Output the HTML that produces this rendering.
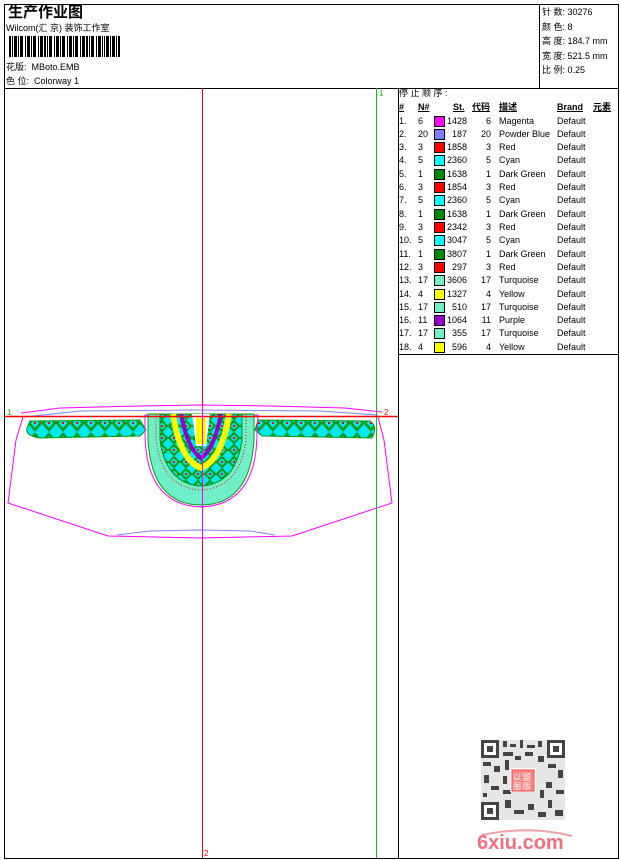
<!DOCTYPE html>
<html><head><meta charset="utf-8"><style>
*{margin:0;padding:0}
body{width:620px;height:860px;background:#fff;position:relative;overflow:hidden;font-family:"Liberation Sans","Noto Sans CJK SC",sans-serif;color:#000}
.t{position:absolute;font-size:9px;white-space:nowrap;line-height:11px}
</style></head><body>
<svg width="620" height="860" style="position:absolute;left:0;top:0" xmlns="http://www.w3.org/2000/svg">
<defs>
<pattern id="dia" x="0" y="0" width="14" height="18" patternUnits="userSpaceOnUse">
<rect width="14" height="18" fill="#00e8f0"/>
<path d="M7 2 L13 9 L7 16 L1 9Z" fill="none" stroke="#089a10" stroke-width="2.5"/>
<rect x="6" y="8" width="2" height="2" fill="#f00"/>
</pattern>
<pattern id="dia2" x="0" y="0" width="12" height="12" patternUnits="userSpaceOnUse">
<rect width="12" height="12" fill="#00e8f0"/>
<path d="M6 1 L11 6 L6 11 L1 6Z" fill="none" stroke="#089a10" stroke-width="2.2"/>
<rect x="5" y="5" width="2" height="2" fill="#f00"/>
</pattern>
</defs>
<rect x="4.5" y="4.5" width="614" height="854" fill="none" stroke="#000"/>
<line x1="4" y1="88.5" x2="618" y2="88.5" stroke="#000"/>
<line x1="539.5" y1="4" x2="539.5" y2="88" stroke="#000"/>
<line x1="398.5" y1="88" x2="398.5" y2="858" stroke="#000"/>
<line x1="398" y1="354.5" x2="618" y2="354.5" stroke="#000"/>
<!-- barcode -->
<g fill="#000">
<rect x="9" y="36" width="2" height="21"/><rect x="12" y="36" width="1" height="21"/><rect x="14" y="36" width="3" height="21"/><rect x="18" y="36" width="1" height="21"/><rect x="20" y="36" width="3" height="21"/><rect x="25" y="36" width="1" height="21"/><rect x="27" y="36" width="3" height="21"/><rect x="31" y="36" width="1" height="21"/><rect x="33" y="36" width="3" height="21"/><rect x="38" y="36" width="1" height="21"/><rect x="40" y="36" width="3" height="21"/><rect x="44" y="36" width="2" height="21"/><rect x="47" y="36" width="1" height="21"/><rect x="49" y="36" width="3" height="21"/><rect x="54" y="36" width="1" height="21"/><rect x="56" y="36" width="3" height="21"/><rect x="60" y="36" width="1" height="21"/><rect x="62" y="36" width="3" height="21"/><rect x="67" y="36" width="1" height="21"/><rect x="69" y="36" width="3" height="21"/><rect x="73" y="36" width="1" height="21"/><rect x="75" y="36" width="3" height="21"/><rect x="80" y="36" width="1" height="21"/><rect x="82" y="36" width="3" height="21"/><rect x="86" y="36" width="2" height="21"/><rect x="89" y="36" width="1" height="21"/><rect x="91" y="36" width="3" height="21"/><rect x="96" y="36" width="1" height="21"/><rect x="98" y="36" width="3" height="21"/><rect x="102" y="36" width="1" height="21"/><rect x="104" y="36" width="1" height="21"/><rect x="106" y="36" width="3" height="21"/><rect x="110" y="36" width="1" height="21"/><rect x="112" y="36" width="3" height="21"/><rect x="116" y="36" width="1" height="21"/><rect x="118" y="36" width="2" height="21"/>
</g>
<!-- garment outlines -->
<g fill="none" stroke-width="1">
<path d="M21 413 L60 408 L140 406 L200 405 L270 406 L345 408 L382 412" stroke="#f0f"/>
<path d="M24 417 L80 411 L200 410 L320 411 L378 415" stroke="#8080ff"/>
<path d="M23 417 L16 440 L8 503 L108 536 L200 538 L292 536 L392 503 L384 440 L378 417" stroke="#f0f"/>
<path d="M117 535 L150 531 L200 530 L250 531 L275 535" stroke="#8080ff"/>
</g>
<!-- band -->
<path d="M30 421 L140 420 L146 430 L140 436 L40 438 Q25 436 27 428Z" fill="url(#dia)" stroke="#089a10" stroke-width="1"/>
<path d="M258 420 L370 421 Q378 426 372 438 L262 436 L255 430Z" fill="url(#dia)" stroke="#089a10" stroke-width="1"/>
<!-- yoke -->
<path d="M145 432 Q145 505 201 507 Q257 505 257 432 L258 415 L145 415Z" fill="none" stroke="#f0f"/>
<path d="M148 414 L254 414 L254 440 Q250 505 201 505 Q152 505 148 440Z" fill="#70f0c8" stroke="#089a10" stroke-width="1"/>
<path d="M156 414 L246 414 L246 440 Q240 488 201 490 Q162 488 156 440Z" fill="none" stroke="#f00" stroke-width="1" stroke-dasharray="1 2"/>
<path d="M160 414 L242 414 L242 440 Q236 484 201 486 Q166 484 160 440Z" fill="url(#dia2)" stroke="#089a10"/>
<path d="M173 414 Q180 460 201 468 Q222 460 229 414" fill="none" stroke="#ff0" stroke-width="6"/>
<path d="M181 414 Q188 450 201 458 Q214 450 221 414" fill="none" stroke="#9000d0" stroke-width="4"/>
<path d="M192 414 L210 414 L206 446 L196 446Z" fill="#fff"/>
<rect x="196" y="418" width="10" height="26" fill="#ff0"/>
<!-- guide lines -->
<line x1="376.5" y1="88" x2="376.5" y2="858" stroke="#0c0"/>
<line x1="4" y1="416.5" x2="398" y2="416.5" stroke="#0c0"/>
<line x1="4" y1="416.5" x2="398" y2="416.5" stroke="#f00" stroke-width="1.5"/>
<line x1="202.5" y1="88" x2="202.5" y2="858" stroke="#f00"/>
<line x1="202.5" y1="405" x2="202.5" y2="540" stroke="#f0f"/>
<!-- QR -->
<g fill="#444">
<rect x="481" y="740" width="84" height="80" fill="#555" opacity="0.15"/>
<rect x="481" y="740" width="18" height="18"/><rect x="484" y="743" width="12" height="12" fill="#fff"/><rect x="487" y="746" width="6" height="6"/>
<rect x="547" y="740" width="18" height="18"/><rect x="550" y="743" width="12" height="12" fill="#fff"/><rect x="553" y="746" width="6" height="6"/>
<rect x="481" y="802" width="18" height="18"/><rect x="484" y="805" width="12" height="12" fill="#fff"/><rect x="487" y="808" width="6" height="6"/>
<rect x="503" y="741" width="4" height="6"/><rect x="510" y="744" width="6" height="3"/><rect x="520" y="740" width="3" height="8"/><rect x="527" y="745" width="8" height="3"/><rect x="538" y="741" width="4" height="6"/>
<rect x="483" y="762" width="8" height="4"/><rect x="494" y="766" width="6" height="6"/><rect x="484" y="775" width="5" height="8"/><rect x="491" y="786" width="8" height="4"/><rect x="483" y="793" width="4" height="4"/>
<rect x="503" y="752" width="10" height="4"/><rect x="505" y="760" width="4" height="10"/><rect x="515" y="756" width="6" height="4"/><rect x="525" y="752" width="8" height="4"/><rect x="538" y="756" width="6" height="6"/>
<rect x="548" y="764" width="8" height="4"/><rect x="558" y="770" width="5" height="8"/><rect x="546" y="782" width="6" height="6"/><rect x="556" y="790" width="8" height="4"/><rect x="548" y="800" width="4" height="8"/>
<rect x="503" y="790" width="8" height="4"/><rect x="505" y="800" width="6" height="8"/><rect x="514" y="810" width="10" height="4"/><rect x="528" y="804" width="6" height="6"/><rect x="538" y="812" width="8" height="5"/><rect x="555" y="810" width="8" height="6"/>
<rect x="540" y="790" width="4" height="8"/><rect x="503" y="776" width="4" height="8"/>
</g>
<rect x="510" y="768" width="26" height="24" fill="#fff"/>
<rect x="512" y="770" width="22" height="21" fill="#f88" stroke="#f44"/>
<text x="513" y="780" font-size="8" fill="#fff" font-family="Noto Sans CJK SC,sans-serif">以 盟</text>
<text x="513" y="789" font-size="8" fill="#fff" font-family="Noto Sans CJK SC,sans-serif">图 版</text>
<path d="M482 835 Q530 825 572 836" fill="none" stroke="#f0a0a8" stroke-width="2"/>
<text x="477" y="849" font-size="20" font-weight="bold" fill="#f07080" font-family="Liberation Sans,sans-serif">6xiu.com</text>
<text x="7" y="415" font-size="8" fill="#0c0">1</text>
<text x="384" y="415" font-size="8" fill="#f00">2</text>
<text x="379" y="96" font-size="8" fill="#0c0">1</text>
<text x="204" y="856" font-size="8" fill="#f00">2</text>
</svg>
<div class="t" style="left:8px;top:4px;font-size:15px;line-height:17px;font-weight:bold">生产作业图</div>
<div class="t" style="left:6px;top:23px">Wilcom(汇 京) 装饰工作室</div>
<div class="t" style="left:6px;top:62px">花版:&nbsp; MBoto.EMB</div>
<div class="t" style="left:6px;top:76px">色 位:&nbsp; Colorway 1</div>
<div class="t" style="left:542px;top:5px;line-height:14.5px">针 数: 30276<br>颜 色: 8<br>高 度: 184.7 mm<br>宽 度: 521.5 mm<br>比 例: 0.25</div>
<div class="t" style="left:399px;top:88px">停 止 顺 序 :</div>
<div id="tb"></div>
<div class="t" style="left:399px;top:102px;font-weight:bold;text-decoration:underline">#</div>
<div class="t" style="left:418px;top:102px;font-weight:bold;text-decoration:underline">N#</div>
<div class="t" style="left:453px;top:102px;font-weight:bold;text-decoration:underline">St.</div>
<div class="t" style="left:472px;top:102px;font-weight:bold;text-decoration:underline">代码</div>
<div class="t" style="left:499px;top:102px;font-weight:bold;text-decoration:underline">描述</div>
<div class="t" style="left:557px;top:102px;font-weight:bold;text-decoration:underline">Brand</div>
<div class="t" style="left:593px;top:102px;font-weight:bold;text-decoration:underline">元素</div>
<div style="position:absolute;left:0;top:0">
<div class="t" style="left:399px;top:116px">1.</div><div class="t" style="left:418px;top:116px">6</div><div style="position:absolute;left:434px;top:116px;width:9px;height:9px;border:1px solid #000;background:#f0f"></div><div class="t" style="left:445px;top:116px;width:22px;text-align:right">1428</div><div class="t" style="left:474px;top:116px;width:17px;text-align:right">6</div><div class="t" style="left:499px;top:116px">Magenta</div><div class="t" style="left:557px;top:116px">Default</div>
<div class="t" style="left:399px;top:129px">2.</div><div class="t" style="left:418px;top:129px">20</div><div style="position:absolute;left:434px;top:129px;width:9px;height:9px;border:1px solid #000;background:#8080ff"></div><div class="t" style="left:445px;top:129px;width:22px;text-align:right">187</div><div class="t" style="left:474px;top:129px;width:17px;text-align:right">20</div><div class="t" style="left:499px;top:129px">Powder Blue</div><div class="t" style="left:557px;top:129px">Default</div>
<div class="t" style="left:399px;top:142px">3.</div><div class="t" style="left:418px;top:142px">3</div><div style="position:absolute;left:434px;top:142px;width:9px;height:9px;border:1px solid #000;background:#f00"></div><div class="t" style="left:445px;top:142px;width:22px;text-align:right">1858</div><div class="t" style="left:474px;top:142px;width:17px;text-align:right">3</div><div class="t" style="left:499px;top:142px">Red</div><div class="t" style="left:557px;top:142px">Default</div>
<div class="t" style="left:399px;top:155px">4.</div><div class="t" style="left:418px;top:155px">5</div><div style="position:absolute;left:434px;top:155px;width:9px;height:9px;border:1px solid #000;background:#0ff"></div><div class="t" style="left:445px;top:155px;width:22px;text-align:right">2360</div><div class="t" style="left:474px;top:155px;width:17px;text-align:right">5</div><div class="t" style="left:499px;top:155px">Cyan</div><div class="t" style="left:557px;top:155px">Default</div>
<div class="t" style="left:399px;top:169px">5.</div><div class="t" style="left:418px;top:169px">1</div><div style="position:absolute;left:434px;top:169px;width:9px;height:9px;border:1px solid #000;background:#080"></div><div class="t" style="left:445px;top:169px;width:22px;text-align:right">1638</div><div class="t" style="left:474px;top:169px;width:17px;text-align:right">1</div><div class="t" style="left:499px;top:169px">Dark Green</div><div class="t" style="left:557px;top:169px">Default</div>
<div class="t" style="left:399px;top:182px">6.</div><div class="t" style="left:418px;top:182px">3</div><div style="position:absolute;left:434px;top:182px;width:9px;height:9px;border:1px solid #000;background:#f00"></div><div class="t" style="left:445px;top:182px;width:22px;text-align:right">1854</div><div class="t" style="left:474px;top:182px;width:17px;text-align:right">3</div><div class="t" style="left:499px;top:182px">Red</div><div class="t" style="left:557px;top:182px">Default</div>
<div class="t" style="left:399px;top:195px">7.</div><div class="t" style="left:418px;top:195px">5</div><div style="position:absolute;left:434px;top:195px;width:9px;height:9px;border:1px solid #000;background:#0ff"></div><div class="t" style="left:445px;top:195px;width:22px;text-align:right">2360</div><div class="t" style="left:474px;top:195px;width:17px;text-align:right">5</div><div class="t" style="left:499px;top:195px">Cyan</div><div class="t" style="left:557px;top:195px">Default</div>
<div class="t" style="left:399px;top:209px">8.</div><div class="t" style="left:418px;top:209px">1</div><div style="position:absolute;left:434px;top:209px;width:9px;height:9px;border:1px solid #000;background:#080"></div><div class="t" style="left:445px;top:209px;width:22px;text-align:right">1638</div><div class="t" style="left:474px;top:209px;width:17px;text-align:right">1</div><div class="t" style="left:499px;top:209px">Dark Green</div><div class="t" style="left:557px;top:209px">Default</div>
<div class="t" style="left:399px;top:222px">9.</div><div class="t" style="left:418px;top:222px">3</div><div style="position:absolute;left:434px;top:222px;width:9px;height:9px;border:1px solid #000;background:#f00"></div><div class="t" style="left:445px;top:222px;width:22px;text-align:right">2342</div><div class="t" style="left:474px;top:222px;width:17px;text-align:right">3</div><div class="t" style="left:499px;top:222px">Red</div><div class="t" style="left:557px;top:222px">Default</div>
<div class="t" style="left:399px;top:235px">10.</div><div class="t" style="left:418px;top:235px">5</div><div style="position:absolute;left:434px;top:235px;width:9px;height:9px;border:1px solid #000;background:#0ff"></div><div class="t" style="left:445px;top:235px;width:22px;text-align:right">3047</div><div class="t" style="left:474px;top:235px;width:17px;text-align:right">5</div><div class="t" style="left:499px;top:235px">Cyan</div><div class="t" style="left:557px;top:235px">Default</div>
<div class="t" style="left:399px;top:249px">11.</div><div class="t" style="left:418px;top:249px">1</div><div style="position:absolute;left:434px;top:249px;width:9px;height:9px;border:1px solid #000;background:#080"></div><div class="t" style="left:445px;top:249px;width:22px;text-align:right">3807</div><div class="t" style="left:474px;top:249px;width:17px;text-align:right">1</div><div class="t" style="left:499px;top:249px">Dark Green</div><div class="t" style="left:557px;top:249px">Default</div>
<div class="t" style="left:399px;top:262px">12.</div><div class="t" style="left:418px;top:262px">3</div><div style="position:absolute;left:434px;top:262px;width:9px;height:9px;border:1px solid #000;background:#f00"></div><div class="t" style="left:445px;top:262px;width:22px;text-align:right">297</div><div class="t" style="left:474px;top:262px;width:17px;text-align:right">3</div><div class="t" style="left:499px;top:262px">Red</div><div class="t" style="left:557px;top:262px">Default</div>
<div class="t" style="left:399px;top:275px">13.</div><div class="t" style="left:418px;top:275px">17</div><div style="position:absolute;left:434px;top:275px;width:9px;height:9px;border:1px solid #000;background:#70f0c8"></div><div class="t" style="left:445px;top:275px;width:22px;text-align:right">3606</div><div class="t" style="left:474px;top:275px;width:17px;text-align:right">17</div><div class="t" style="left:499px;top:275px">Turquoise</div><div class="t" style="left:557px;top:275px">Default</div>
<div class="t" style="left:399px;top:289px">14.</div><div class="t" style="left:418px;top:289px">4</div><div style="position:absolute;left:434px;top:289px;width:9px;height:9px;border:1px solid #000;background:#ff0"></div><div class="t" style="left:445px;top:289px;width:22px;text-align:right">1327</div><div class="t" style="left:474px;top:289px;width:17px;text-align:right">4</div><div class="t" style="left:499px;top:289px">Yellow</div><div class="t" style="left:557px;top:289px">Default</div>
<div class="t" style="left:399px;top:302px">15.</div><div class="t" style="left:418px;top:302px">17</div><div style="position:absolute;left:434px;top:302px;width:9px;height:9px;border:1px solid #000;background:#70f0c8"></div><div class="t" style="left:445px;top:302px;width:22px;text-align:right">510</div><div class="t" style="left:474px;top:302px;width:17px;text-align:right">17</div><div class="t" style="left:499px;top:302px">Turquoise</div><div class="t" style="left:557px;top:302px">Default</div>
<div class="t" style="left:399px;top:315px">16.</div><div class="t" style="left:418px;top:315px">11</div><div style="position:absolute;left:434px;top:315px;width:9px;height:9px;border:1px solid #000;background:#90c"></div><div class="t" style="left:445px;top:315px;width:22px;text-align:right">1064</div><div class="t" style="left:474px;top:315px;width:17px;text-align:right">11</div><div class="t" style="left:499px;top:315px">Purple</div><div class="t" style="left:557px;top:315px">Default</div>
<div class="t" style="left:399px;top:328px">17.</div><div class="t" style="left:418px;top:328px">17</div><div style="position:absolute;left:434px;top:328px;width:9px;height:9px;border:1px solid #000;background:#70f0c8"></div><div class="t" style="left:445px;top:328px;width:22px;text-align:right">355</div><div class="t" style="left:474px;top:328px;width:17px;text-align:right">17</div><div class="t" style="left:499px;top:328px">Turquoise</div><div class="t" style="left:557px;top:328px">Default</div>
<div class="t" style="left:399px;top:342px">18.</div><div class="t" style="left:418px;top:342px">4</div><div style="position:absolute;left:434px;top:342px;width:9px;height:9px;border:1px solid #000;background:#ff0"></div><div class="t" style="left:445px;top:342px;width:22px;text-align:right">596</div><div class="t" style="left:474px;top:342px;width:17px;text-align:right">4</div><div class="t" style="left:499px;top:342px">Yellow</div><div class="t" style="left:557px;top:342px">Default</div>
</div>
</body></html>
